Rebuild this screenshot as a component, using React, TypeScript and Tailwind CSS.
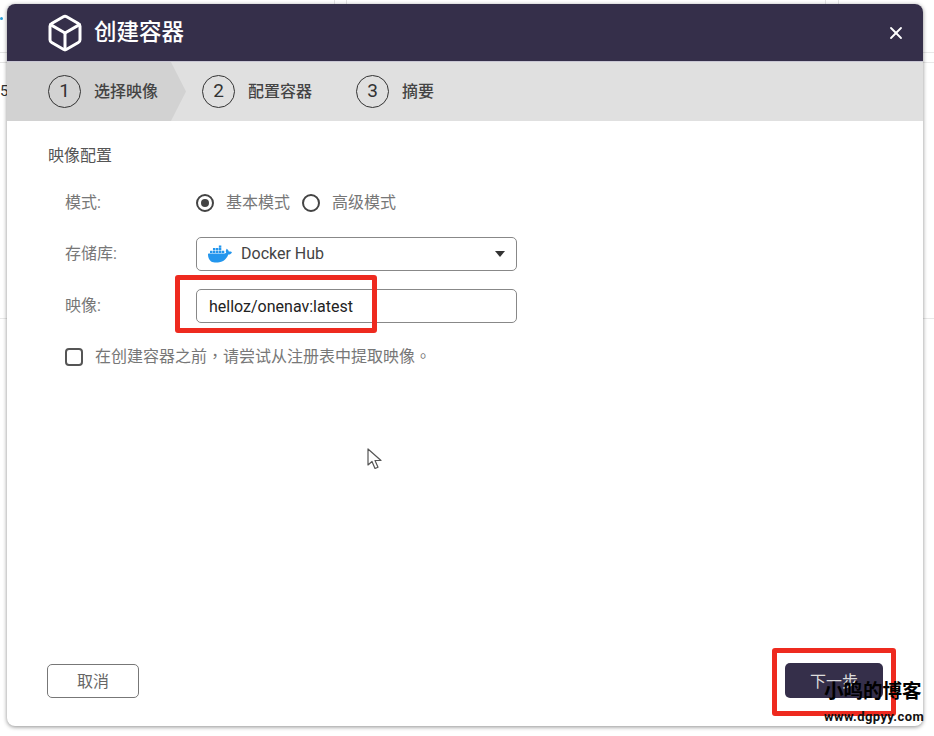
import { Box, X } from "lucide-react";
import { SiDocker } from "react-icons/si";

const font = "font-['Roboto','Noto_Sans_CJK_SC',sans-serif]";

function Step({ n, label, className }: { n: number; label: string; className: string }) {
  return (
    <div className={`flex items-center gap-[13px] ${className}`}>
      <span className="flex h-[33px] w-[33px] items-center justify-center rounded-full border-[1.5px] border-[#333] text-[19px] text-[#333]">
        {n}
      </span>
      <span className="text-[16px] font-medium text-[#444]">{label}</span>
    </div>
  );
}

function Row({ label, children }: { label: string; children: React.ReactNode }) {
  return (
    <div className="flex items-center">
      <span className="w-[131px] text-[16px] text-[#777]">{label}</span>
      {children}
    </div>
  );
}

function Radio({ checked, label }: { checked?: boolean; label: string }) {
  return (
    <label className="flex items-center gap-[12px]">
      <span className="flex h-[18px] w-[18px] items-center justify-center rounded-full border-2 border-[#444]">
        {checked && <span className="h-[8px] w-[8px] rounded-full bg-[#444]" />}
      </span>
      <span className="text-[16px] text-[#777]">{label}</span>
    </label>
  );
}

export default function App() {
  return (
    <div className={`relative h-[736px] w-[934px] overflow-hidden bg-white pl-[7px] pt-[4px] ${font}`}>
      {/* page behind the dialog */}
      <div className="absolute left-0 top-[52px] h-px w-[7px] bg-[#e4e4e4]" />
      <div className="absolute left-0 top-[62px] h-px w-[7px] bg-[#e4e4e4]" />
      <div className="absolute left-0 top-[84px] text-[15px] leading-none text-[#333]">5</div>
      <div className="absolute left-0 top-[17px] h-[3px] w-[3px] rounded-full bg-[#2a9fd8]" />
      <div className="absolute left-[923px] top-[52px] h-px w-[11px] bg-[#e8e8e8]" />
      <div className="absolute left-[923px] top-[62px] h-px w-[11px] bg-[#e8e8e8]" />
      <div className="absolute left-[923px] top-[318px] h-px w-[11px] bg-[#e8e8e8]" />
      <div className="absolute left-0 top-[318px] h-px w-[7px] bg-[#e8e8e8]" />
      <div className="absolute left-[334px] top-0 h-[4px] w-px bg-[#e4e4e4]" />
      <div className="absolute left-[346px] top-0 h-[4px] w-px bg-[#e4e4e4]" />
      <div className="absolute left-[825px] top-0 h-[4px] w-px bg-[#e4e4e4]" />
      <div className="absolute left-[838px] top-0 h-[4px] w-px bg-[#e4e4e4]" />

      <div className="relative flex h-[722px] w-[916px] flex-col overflow-hidden rounded-[8px] bg-white shadow-[0_1px_4px_rgba(0,0,0,0.45)]">
        <header className="flex h-[58px] shrink-0 items-center border-b border-[#c9c7d4] bg-[#352f4a] pl-[38px] pr-[17px] text-white">
          <Box size={40} strokeWidth={1.8} />
          <h1 className="ml-[9px] text-[22.5px] font-medium">创建容器</h1>
          <X className="ml-auto" size={20} strokeWidth={2.2} />
        </header>

        <div className="flex h-[59px] shrink-0 items-center bg-[#e0e0e0]">
          <Step
            n={1}
            label="选择映像"
            className="h-full w-[179px] bg-[#d2d2d2] pl-[41px] [clip-path:polygon(0_0,164px_0,179px_50%,164px_100%,0_100%)]"
          />
          <Step n={2} label="配置容器" className="ml-[16px] w-[154px]" />
          <Step n={3} label="摘要" className="" />
        </div>

        <main className="flex flex-1 flex-col px-[41px] pt-[24px]">
          <h2 className="text-[16px] leading-[22px] text-[#555]">映像配置</h2>

          <div className="ml-[17px] mt-[24px] flex flex-col">
            <Row label="模式:">
              <div className="flex items-center gap-[12px]">
                <Radio checked label="基本模式" />
                <Radio label="高级模式" />
              </div>
            </Row>

            <div className="mt-[22px]">
              <Row label="存储库:">
                <div className="flex h-[34px] w-[321px] items-center rounded-[5px] border border-[#888] pl-[11px] pr-[11px]">
                  <SiDocker size={24} className="text-[#2396ed]" />
                  <span className="ml-[9px] text-[16px] text-[#444]">Docker Hub</span>
                  <span className="ml-auto h-0 w-0 border-x-[5px] border-t-[6px] border-x-transparent border-t-[#333]" />
                </div>
              </Row>
            </div>

            <div className="mt-[18px]">
              <Row label="映像:">
                <input
                  readOnly
                  value="helloz/onenav:latest"
                  className="h-[34px] w-[321px] rounded-[5px] border border-[#888] px-[12px] text-[16px] text-[#222] outline-none"
                />
              </Row>
            </div>

            <label className="mt-[22px] flex items-center gap-[12px]">
              <span className="h-[18px] w-[18px] rounded-[4px] border-2 border-[#555]" />
              <span className="font-['Roboto','Noto_Sans_CJK_TC',sans-serif] text-[16px] text-[#777]">
                在创建容器之前，请尝试从注册表中提取映像。
              </span>
            </label>
          </div>

          <div className="mb-[28px] mt-auto flex items-center justify-between">
            <button className="-ml-px h-[34px] w-[92px] rounded-[5px] border border-[#777] pt-[3px] text-[16px] text-[#666]">
              取消
            </button>
            <button className="-mr-px h-[35px] w-[98px] rounded-[5px] bg-[#352f4a] pt-[2px] text-[16px] text-[#ddd]">
              下一步
            </button>
          </div>
        </main>
      </div>

      {/* annotations on top of the screenshot */}
      <div className="absolute left-[175px] top-[275px] h-[58px] w-[202px] rounded-[3px] border-[5px] border-[#ee2a1f]" />
      <div className="absolute left-[772px] top-[648px] h-[68px] w-[124px] rounded-[3px] border-[5px] border-[#ee2a1f]" />

      <svg className="absolute left-[367px] top-[448px]" width="16" height="23" viewBox="0 0 16 23">
        <path
          d="M1 1v16l4-3.500 3 7 3-1.300-3-6.700h6z"
          fill="#fff"
          stroke="#555"
          strokeWidth="1.200"
          strokeLinejoin="round"
        />
      </svg>

      <div className="absolute left-[824px] top-[679px] text-[19.5px] font-bold leading-[26px] text-black">小鸣的博客</div>
      <div className="absolute left-[824px] top-[709px] text-[13px] font-bold leading-[15px] tracking-[0.4px] text-[#111]">
        www.dgpyy.com
      </div>
    </div>
  );
}
